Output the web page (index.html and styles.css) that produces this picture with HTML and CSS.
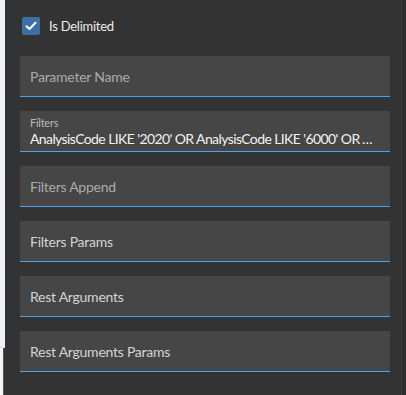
FILE: index.html
```html
<!DOCTYPE html>
<html lang="en">
    <head>
        <meta charset="UTF-8">
        <meta name="viewport" content="width=device-width, initial-scale=1.0">
        <title>Parameters</title>
        <link rel="stylesheet" href="styles.css">
    </head>
    <body>
        <div class="page">
            <!-- Bord gauche -->
            <div class="side-left">
                <div class="side-top"></div>
                <div class="side-bottom"></div>
            </div>
            <!-- Panneau des parametres -->
            <div class="panel">
                <label class="check-row">
                    <span class="check-box">
                        <svg width="12" height="10" viewBox="0 0 12 10">
                            <path d="M1.5 5.2 L4.5 8 L10.5 1.8" fill="none" stroke="#ffffff" stroke-width="2" stroke-linecap="round" stroke-linejoin="round"/>
                        </svg>
                    </span>
                    <span class="check-label">Is Delimited</span>
                </label>
                <div class="field">
                    <span class="field-hint dim">Parameter Name</span>
                </div>
                <div class="field filled">
                    <span class="field-small">Filters</span>
                    <span class="field-value">AnalysisCode LIKE '2020' OR AnalysisCode LIKE '6000' OR AnalysisCode LIKE '7000'</span>
                </div>
                <div class="field">
                    <span class="field-hint dim">Filters Append</span>
                </div>
                <div class="field">
                    <span class="field-hint">Filters Params</span>
                </div>
                <div class="field">
                    <span class="field-hint">Rest Arguments</span>
                </div>
                <div class="field">
                    <span class="field-hint">Rest Arguments Params</span>
                </div>
            </div>
            <div class="side-right"></div>
        </div>
    </body>
</html>
```

FILE: styles.css
```css
/* Style global */
body, html {
    margin: 0;
    padding: 0;
    height: 100%;
    background-color: #333333;
    font-family: Lato, 'Open Sans', sans-serif;
    letter-spacing: -0.25px;
    overflow: hidden;
}

.page {
    display: flex;
    height: 100vh;
}

/* Bords */
.side-left {
    width: 5px;
    flex-shrink: 0;
    display: flex;
    flex-direction: column;
}

.side-top {
    height: 347px;
    background-color: #eef2f6;
    border-bottom: 1px solid #d8dde2;
}

.side-bottom {
    flex-grow: 1;
    background-color: #f4f6f8;
    border-right: 1px solid #5a5a5a;
    margin-right: 1px;
}

.side-right {
    width: 4px;
    flex-shrink: 0;
    background-color: #2e2e2e;
    border-left: 1px dotted #454545;
}

/* Panneau */
.panel {
    flex-grow: 1;
    min-width: 0;
    background-color: #333333;
    padding: 17px 11px 0 15px;
    display: flex;
    flex-direction: column;
    gap: 14px;
}

.check-row {
    display: flex;
    align-items: center;
    height: 18px;
    padding-left: 2px;
    margin-bottom: 7px;
}

.check-box {
    width: 18px;
    height: 18px;
    border-radius: 2px;
    background-color: #3c6fa6;
    display: flex;
    align-items: center;
    justify-content: center;
}

.check-label {
    margin-left: 9px;
    color: #ececec;
    font-size: 13px;
}

/* Champs */
.field {
    height: 40px;
    background-color: #464646;
    border-bottom: 1px solid #4aa3ef;
    padding: 0 10px;
    display: flex;
    flex-direction: column;
    justify-content: center;
}

.field-hint {
    font-size: 14px;
    color: #d4d4d4;
}

.field-hint.dim {
    color: #ababab;
}

.field.filled {
    justify-content: flex-start;
    padding-top: 5px;
    height: 35px;
}

.field-small {
    font-size: 11px;
    color: #bbbbbb;
    line-height: 14px;
}

.field-value {
    font-size: 14px;
    color: #f2f2f2;
    line-height: 17px;
    letter-spacing: -0.6px;
    white-space: nowrap;
    overflow: hidden;
    text-overflow: ellipsis;
}
```
